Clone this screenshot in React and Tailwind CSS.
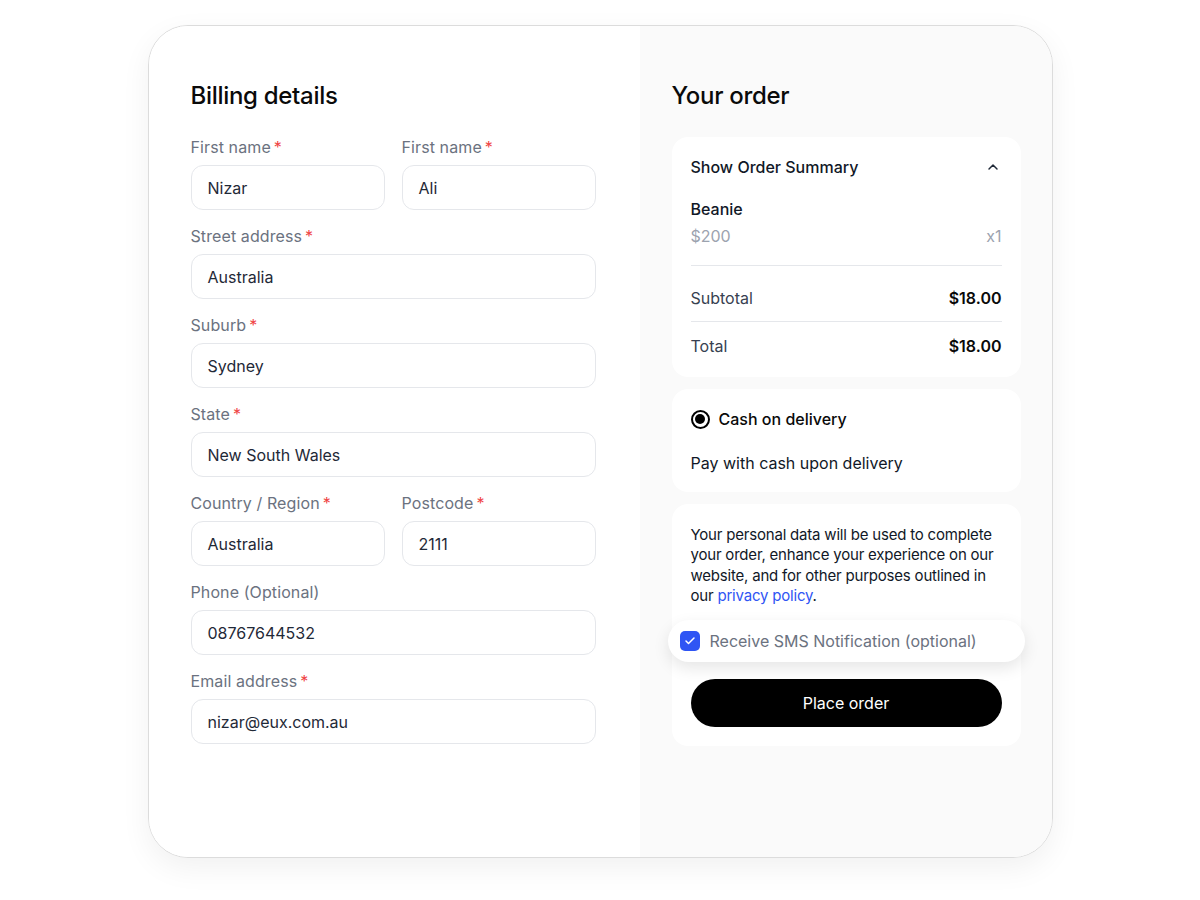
import React from "react";
import { ChevronUp, Check } from "lucide-react";

const font = { fontFamily: "Inter, 'Noto Sans', sans-serif" };

function Field({ label, value, required }) {
  return (
    <div className="flex flex-col gap-[6px]">
      <label className="text-[16px] leading-6 text-[#6b7280] tracking-[0.1px]">
        {label}
        {required && <span className="text-[#ef4444] ml-[3px]">*</span>}
      </label>
      <div className="h-[45px] rounded-[12px] border border-[#e5e7eb] px-4 flex items-center text-[16px] text-[#1f2937]">
        {value}
      </div>
    </div>
  );
}

export default function App() {
  return (
    <div className="w-full h-[900px] bg-white pt-[25px]" style={font}>
      <div className="mx-auto w-[905px] h-[833px] rounded-[40px] border border-[#dcdcdc] shadow-[0_10px_30px_rgba(0,0,0,0.06)] overflow-hidden flex">
        <div className="w-[491px] bg-white pl-[42px] pr-[44px] pt-[54px]">
          <h2 className="text-[24px] leading-8 font-medium text-[#0a0a0a] tracking-[-0.3px]">Billing details</h2>
          <div className="mt-[23px] flex flex-col gap-[14px]">
            <div className="grid grid-cols-2 gap-[17px]">
              <Field label="First name" value="Nizar" required />
              <Field label="First name" value="Ali" required />
            </div>
            <Field label="Street address" value="Australia" required />
            <Field label="Suburb" value="Sydney" required />
            <Field label="State" value="New South Wales" required />
            <div className="grid grid-cols-2 gap-[17px]">
              <Field label="Country / Region" value="Australia" required />
              <Field label="Postcode" value="2111" required />
            </div>
            <Field label="Phone (Optional)" value="08767644532" />
            <Field label="Email address" value="nizar@eux.com.au" required />
          </div>
        </div>
        <div className="flex-1 bg-[#fafafa] pl-[32px] pr-[31px] pt-[54px]">
          <h2 className="text-[24px] leading-8 font-medium text-[#0a0a0a] tracking-[-0.3px]">Your order</h2>
          <div className="mt-[25px] bg-white rounded-[16px] px-[19px] pt-[18px] pb-[19px]">
            <div className="flex items-center justify-between h-6">
              <span className="text-[16px] font-medium text-[#111827]">Show Order Summary</span>
              <ChevronUp size={16} strokeWidth={2.2} className="text-[#1f2937] mr-[1px]" />
            </div>
            <div className="mt-[18px] text-[16px] font-medium text-[#111827] leading-6">Beanie</div>
            <div className="mt-[3px] flex justify-between text-[16px] leading-6 text-[#9ca3af]">
              <span>$200</span>
              <span>x1</span>
            </div>
            <div className="mt-[17px] border-t border-[#e5e7eb]" />
            <div className="flex justify-between items-center h-6 mt-[20px] mb-[11px] text-[16px]">
              <span className="text-[#374151]">Subtotal</span>
              <span className="font-semibold text-[#0a0a0a]">$18.00</span>
            </div>
            <div className="border-t border-[#e5e7eb]" />
            <div className="flex justify-between items-center h-6 mt-[12px] text-[16px]">
              <span className="text-[#374151]">Total</span>
              <span className="font-semibold text-[#0a0a0a]">$18.00</span>
            </div>
          </div>
          <div className="mt-[12px] bg-white rounded-[16px] px-[19px] pt-[18px] pb-[17px]">
            <div className="flex items-center gap-[9px] h-6">
              <span className="w-[19px] h-[19px] rounded-full border-2 border-black flex items-center justify-center">
                <span className="w-[10px] h-[10px] rounded-full bg-black" />
              </span>
              <span className="text-[16px] font-medium text-[#0a0a0a]">Cash on delivery</span>
            </div>
            <div className="mt-[20px] text-[16px] leading-6 text-[#111827]">Pay with cash upon delivery</div>
          </div>
          <div className="mt-[12px] bg-white rounded-[16px] pt-[21px] pb-[19px]">
            <p className="pl-[19px] pr-[12px] text-[15px] leading-[20.4px] tracking-[-0.2px] text-[#111827]">
              Your personal data will be used to complete your order, enhance your experience on our website, and for other purposes outlined in our{" "}
              <span className="text-[#2f55f4]">privacy policy</span>.
            </p>
            <div className="mt-[13px] -mx-[4px] h-[42px] rounded-full bg-white shadow-[0_6px_16px_rgba(0,0,0,0.10)] flex items-center gap-[10px] pl-[12px]">
              <span className="w-[20px] h-[20px] rounded-[5px] bg-[#2f55f4] flex items-center justify-center">
                <Check size={12} strokeWidth={3} className="text-white" />
              </span>
              <span className="text-[16px] text-[#6b7280]">Receive SMS Notification (optional)</span>
            </div>
            <div className="px-[19px] mt-[17px]">
              <button className="w-full h-[48px] rounded-full bg-black text-white text-[16px]">Place order</button>
            </div>
          </div>
        </div>
      </div>
    </div>
  );
}
